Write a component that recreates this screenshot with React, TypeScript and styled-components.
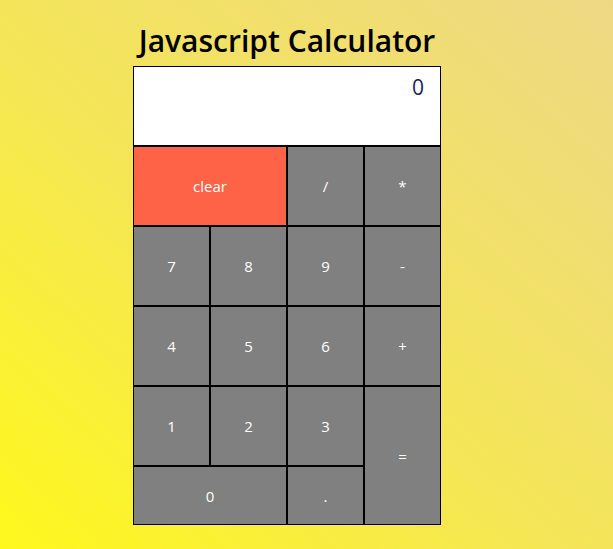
import React from "react";
import styled, { createGlobalStyle } from "styled-components";

const GlobalStyle = createGlobalStyle`
  html, body {
    margin: 0;
    padding: 0;
    height: 100%;
  }
  body {
    min-height: 549px;
    background: linear-gradient(to top right, #fff81c 0%, #f4e656 45%, #eed885 100%);
    font-family: "Open Sans", "Noto Sans", sans-serif;
  }
`;

const Page = styled.div`
  display: flex;
  flex-direction: column;
  align-items: center;
  width: 574px;
  padding-top: 22px;
`;

const Title = styled.h1`
  margin: 0 0 6px 0;
  font-size: 30px;
  line-height: 38px;
  font-weight: 600;
  color: #000;
  letter-spacing: 0;
`;

const Calculator = styled.div`
  width: 308px;
  display: flex;
  flex-direction: column;
`;

const Display = styled.div`
  box-sizing: border-box;
  height: 80px;
  background: #fff;
  border: 1px solid #000;
  text-align: right;
  padding: 6px 16px 0 0;
  font-size: 21px;
  line-height: 28px;
  color: #1b2450;
`;

const Keypad = styled.div`
  display: grid;
  grid-template-columns: repeat(4, 77px);
  grid-template-rows: 80px 80px 80px 80px 59px;
`;

const Key = styled.button<{ $col?: string; $row?: string; $accent?: boolean }>`
  box-sizing: border-box;
  margin: 0;
  padding: 0;
  border: 1px solid #000;
  border-radius: 0;
  background: ${(p) => (p.$accent ? "#ff6347" : "#808080")};
  color: #fff;
  font-family: "Open Sans", "Noto Sans", sans-serif;
  font-size: 15px;
  display: flex;
  align-items: center;
  justify-content: center;
  grid-column: ${(p) => p.$col || "auto"};
  grid-row: ${(p) => p.$row || "auto"};
  cursor: pointer;
`;

export default function App() {
  return (
    <>
      <GlobalStyle />
      <Page>
        <Title>Javascript Calculator</Title>
        <Calculator>
          <Display>0</Display>
          <Keypad>
            <Key $accent $col="span 2">clear</Key>
            <Key>/</Key>
            <Key>*</Key>
            <Key>7</Key>
            <Key>8</Key>
            <Key>9</Key>
            <Key>-</Key>
            <Key>4</Key>
            <Key>5</Key>
            <Key>6</Key>
            <Key>+</Key>
            <Key>1</Key>
            <Key>2</Key>
            <Key>3</Key>
            <Key $col="4" $row="4 / span 2">=</Key>
            <Key $col="1 / span 2">0</Key>
            <Key>.</Key>
          </Keypad>
        </Calculator>
      </Page>
    </>
  );
}
